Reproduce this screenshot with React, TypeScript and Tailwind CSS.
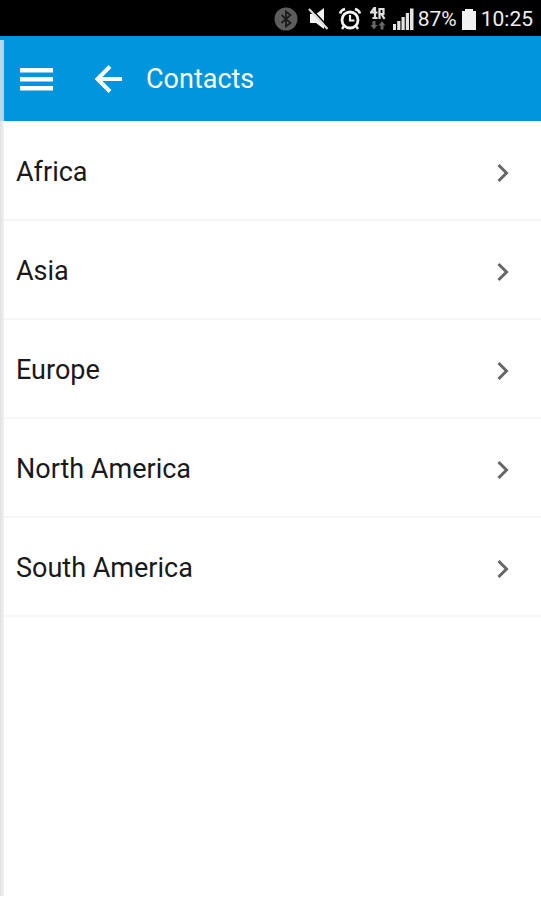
const regions = ["Africa", "Asia", "Europe", "North America", "South America"];

function BluetoothIcon() {
  return (
    <svg className="h-6 w-6" viewBox="0 0 24 24" aria-hidden="true">
      <circle cx="12" cy="12" r="11.500" fill="#5c5c5c" />
      <path d="M7.500 8l9 8L12 19.500v-15L16.500 8l-9 8" fill="none" stroke="#1c1c1c" strokeWidth="1.800" />
    </svg>
  );
}

function MutedIcon() {
  return (
    <svg className="h-6 w-6" viewBox="0 0 24 24" aria-hidden="true">
      <path d="M4 7h6l8-6v21l-8-6H4z" fill="#f2f2f2" />
      <path d="M4.500 1l18 19" stroke="#000" strokeWidth="1.500" />
      <path d="M3 2l18.500 20" stroke="#dcdcdc" strokeWidth="2.200" />
    </svg>
  );
}

function AlarmIcon() {
  return (
    <svg className="h-6 w-6" viewBox="0 0 24 24" fill="none" stroke="#f4f4f4" aria-hidden="true">
      <circle cx="12" cy="13" r="8" strokeWidth="2.800" />
      <path d="M12 8v5.500h4.500" strokeWidth="2.200" />
      <path d="M2 6.500q1-3.500 5-4.500M22 6.500q-1-3.500-5-4.500" strokeWidth="2.600" />
      <path d="M6 19l-2 3M18 19l2 3" strokeWidth="2.400" />
    </svg>
  );
}

function NetworkIcon() {
  return (
    <svg className="h-6 w-4" viewBox="0 0 16 24" fill="none" aria-hidden="true">
      <path d="M5 0L1 5.500h6.500M5 0v12M2.500 11h5" stroke="#e0e0e0" strokeWidth="2.200" />
      <path d="M9.500 12V2h4v5h-4M11.500 7l3 5" stroke="#e0e0e0" strokeWidth="2.200" />
      <path d="M2.500 14h3v4h2L4 22.500.5 18h2zM10.500 22.500h3v-4h2L12 14l-3.500 4.500h2z" fill="#666" />
    </svg>
  );
}

function SignalIcon() {
  return (
    <svg className="h-6 w-[22px]" viewBox="0 0 22 24" fill="#e4e4e4" aria-hidden="true">
      <path d="M1 17h3v6H1zM5.200 14h3.200v9H5.200zM9.500 10h3.200v13H9.500zM13.800 6H17v17h-3.200zM18 1.500h3.500V23H18z" />
    </svg>
  );
}

function BatteryIcon() {
  return (
    <svg className="h-6 w-4" viewBox="0 0 16 24" fill="#f2f2f2" aria-hidden="true">
      <path d="M4 2h8v2h3v19H1V4h3z" />
    </svg>
  );
}

function MenuIcon() {
  return (
    <svg className="h-6 w-[34px]" viewBox="0 0 34 24" fill="white" aria-hidden="true">
      <path d="M0 1h33v4.500H0zM0 10h33v4.500H0zM0 19h33v4.500H0z" />
    </svg>
  );
}

function BackIcon() {
  return (
    <svg className="h-7 w-7" viewBox="0 0 28 28" fill="none" stroke="white" strokeWidth="4" aria-hidden="true">
      <path d="M16 1.500L3.500 14L16 26.500M3.500 14H28" />
    </svg>
  );
}

function ChevronIcon() {
  return (
    <svg className="h-5 w-3" viewBox="0 0 12 20" fill="none" stroke="#666" strokeWidth="3" aria-hidden="true">
      <path d="M1.500 2L9.500 10L1.500 18" />
    </svg>
  );
}

export default function App() {
  return (
    <div className="relative min-h-screen bg-white font-['Roboto',sans-serif]">
      <div className="flex h-9 items-center justify-end bg-black pt-0.5 pr-2 text-[21px] text-[#eee]">
        <div className="mr-1.5 flex items-center gap-2">
          <BluetoothIcon />
          <MutedIcon />
          <AlarmIcon />
          <NetworkIcon />
        </div>
        <SignalIcon />
        <span className="ml-1 pt-0.5">87%</span>
        <span className="mx-1"><BatteryIcon /></span>
        <time className="pt-0.5">10:25</time>
      </div>

      <header className="flex h-[85px] items-center bg-[#0095dc] px-5 pt-px text-white">
        <button type="button" aria-label="Menu"><MenuIcon /></button>
        <button type="button" aria-label="Back" className="ml-10"><BackIcon /></button>
        <h1 className="ml-6 pt-px text-[27px]">Contacts</h1>
      </header>

      <ul className="pt-px">
        {regions.map((region) => (
          <li key={region} className="border-b-2 border-[#f7f7f7]">
            <button type="button" className="flex h-[97px] w-full items-center justify-between pt-1 pr-8 pl-4 text-left text-[27px] text-[#191919]">
              <span>{region}</span>
              <ChevronIcon />
            </button>
          </li>
        ))}
      </ul>

      <div className="absolute top-10 bottom-1 left-0 w-1 bg-linear-to-r from-[#dedee2]/90 to-[#ededf0]/70" />
    </div>
  );
}
